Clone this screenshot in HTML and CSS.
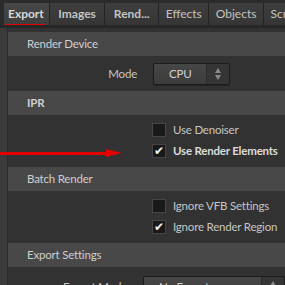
FILE: index.html
```html
<!DOCTYPE html>
<html lang="en">
<head>
    <meta charset="UTF-8">
    <title>Render Settings</title>
    <link rel="stylesheet" href="styles.css">
</head>
<body>
    <div class="tabs">
        <div class="tab active bold">Export</div>
        <div class="tab bold">Images</div>
        <div class="tab bold">Rend...</div>
        <div class="tab">Effects</div>
        <div class="tab">Objects</div>
        <div class="tab last">Scr</div>
    </div>

    <div class="panel">
        <div class="gutter"></div>
        <div class="content">
            <div class="section-head">Render Device</div>
            <div class="field-row">
                <div class="field-label">Mode</div>
                <div class="dropdown">
                    <span class="dropdown-value">CPU</span>
                    <span class="dropdown-arrows"><span class="up"></span><span class="down"></span></span>
                </div>
            </div>

            <div class="section-head bold">IPR</div>
            <div class="checks">
                <div class="check-row"><span class="box"></span><span>Use Denoiser</span></div>
                <div class="check-row strong"><span class="box checked">&#10004;</span><span>Use Render Elements</span></div>
            </div>

            <div class="section-head">Batch Render</div>
            <div class="checks">
                <div class="check-row"><span class="box"></span><span>Ignore VFB Settings</span></div>
                <div class="check-row"><span class="box checked">&#10004;</span><span>Ignore Render Region</span></div>
            </div>

            <div class="section-head">Export Settings</div>
            <div class="field-row spaced">
                <div class="field-label">Export Mode</div>
                <div class="dropdown wide">
                    <span class="dropdown-value">No Export</span>
                    <span class="dropdown-arrows"><span class="up"></span><span class="down"></span></span>
                </div>
            </div>
        </div>
    </div>

    <div class="pointer"></div>
</body>
</html>
```

FILE: styles.css
```css
body {
    margin: 0;
    width: 285px;
    height: 285px;
    overflow: hidden;
    background: #2a2a2a;
    font-family: Lato, "Liberation Sans", sans-serif;
    font-size: 12px;
    color: #c6c6c6;
    position: relative;
}

.bold {
    font-weight: 700;
}

.tabs {
    display: flex;
    padding-top: 3px;
    height: 22px;
    border-bottom: 3px solid #262626;
    background: #2b2b2b;
    white-space: nowrap;
    overflow: hidden;
}

.tab {
    position: relative;
    flex-shrink: 0;
    padding: 0 6.5px;
    line-height: 22px;
    background: linear-gradient(#3e3e3e, #363636);
    border-right: 1px solid #242424;
    font-size: 12px;
    color: #c4c4c4;
}

.tab.bold {
    padding: 0 8.5px;
}

.tab.active {
    margin-left: 4px;
    padding: 0 5px 0 4px;
    background: linear-gradient(#474747, #3d3d3d);
    color: #d8d8d8;
}

.tab.active::after {
    content: '';
    position: absolute;
    left: 1px;
    right: 4px;
    bottom: -2px;
    height: 3px;
    background: #e30000;
}

.tab.last {
    border-right: none;
}

.panel {
    display: flex;
    height: 257px;
}

.gutter {
    flex-shrink: 0;
    width: 7px;
    background: #3b3b3b;
    border-right: 1px solid #2a2a2a;
}

.content {
    flex: 1;
    min-width: 0;
    background: #323232;
    padding-top: 4px;
    white-space: nowrap;
    font-size: 11.5px;
    letter-spacing: -0.2px;
}

.section-head {
    height: 24px;
    line-height: 24px;
    padding-left: 19px;
    background: #484848;
    color: #cfcfcf;
}

.field-row {
    display: flex;
    align-items: center;
    height: 35px;
}

.field-row.spaced {
    align-items: flex-start;
    padding-top: 9px;
}

.field-row.spaced .field-label {
    line-height: 22px;
}

.field-label {
    width: 129px;
    text-align: right;
    margin-right: 16px;
}

.dropdown {
    display: flex;
    flex-shrink: 0;
    width: 75px;
    height: 20px;
    border: 1px solid #1c1c1c;
    border-radius: 2px;
    background: linear-gradient(#474747, #3b3b3b);
    box-shadow: 0 1px 1px rgba(0, 0, 0, 0.3);
}

.dropdown.wide {
    width: 140px;
}

.dropdown-value {
    flex: 1;
    padding-left: 15px;
    line-height: 20px;
    color: #d0d0d0;
}

.dropdown-arrows {
    width: 22px;
    background: #353535;
    border-left: 1px solid #2c2c2c;
    display: flex;
    flex-direction: column;
    align-items: center;
    justify-content: center;
    gap: 2px;
}

.up,
.down {
    width: 0;
    height: 0;
    border-left: 3.5px solid transparent;
    border-right: 3.5px solid transparent;
}

.up {
    border-bottom: 5px solid #8a8a8a;
}

.down {
    border-top: 5px solid #8a8a8a;
}

.checks {
    padding: 4px 0 6px;
}

.check-row {
    display: flex;
    align-items: center;
    height: 21px;
    padding-left: 144px;
}

.check-row.strong {
    font-weight: 700;
    color: #dcdcdc;
}

.box {
    flex-shrink: 0;
    width: 12px;
    height: 12px;
    margin-right: 7px;
    background: #191919;
    border: 1px solid #454545;
    color: #f2f2f2;
    font-size: 12px;
    line-height: 12px;
    text-align: center;
    font-weight: 400;
    letter-spacing: 0;
}

.pointer {
    position: absolute;
    left: 0;
    top: 152px;
    width: 108px;
    height: 3px;
    background: #e30000;
}

.pointer::after {
    content: '';
    position: absolute;
    left: 106px;
    top: -3px;
    border-top: 4.5px solid transparent;
    border-bottom: 4.5px solid transparent;
    border-left: 16px solid #e30000;
}
```
